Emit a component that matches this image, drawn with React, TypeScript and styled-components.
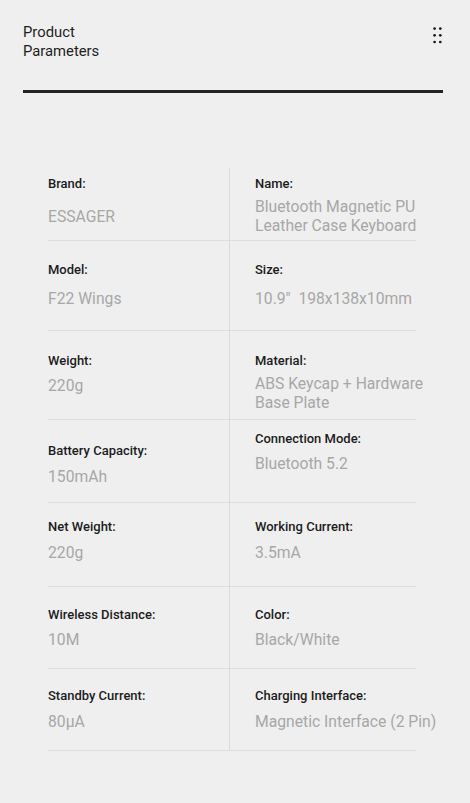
import React from 'react';
import styled, { createGlobalStyle } from 'styled-components';

const GlobalStyle = createGlobalStyle`
  html, body {
    margin: 0;
    padding: 0;
    background: #efefef;
  }
  body {
    font-family: Roboto, "Noto Sans", "Liberation Sans", sans-serif;
    -webkit-font-smoothing: antialiased;
  }
`;

const Page = styled.div({
  width: 470,
  minHeight: 803,
  background: '#efefef',
  boxSizing: 'border-box',
  paddingTop: 23,
});

const Header = styled.header({
  display: 'flex',
  justifyContent: 'space-between',
  alignItems: 'flex-start',
  padding: '0 26px 0 23px',
});

const Title = styled.h1({
  margin: 0,
  fontSize: '14.8px',
  fontWeight: 400,
  lineHeight: '19px',
  color: '#1e1e1e',
  width: 100,
});

const Rule = styled.div({
  height: 3,
  margin: '29px 27px 0 23px',
  background: '#232323',
});

const Grid = styled.div({
  display: 'grid',
  gridTemplateColumns: '181px 187px',
  margin: '75px 0 0 48px',
  width: 368,
});

const Cell = styled.div<{ $right?: boolean; $top: number; $height: number }>`
  box-sizing: border-box;
  height: ${(p) => p.$height}px;
  padding-top: ${(p) => p.$top}px;
  padding-left: ${(p) => (p.$right ? 25 : 0)}px;
  border-bottom: 1px solid #dddddd;
  border-left: ${(p) => (p.$right ? '1px solid #dadada' : 'none')};
  display: flex;
  flex-direction: column;
`;

const Label = styled.div({
  fontSize: '13px',
  fontWeight: 500,
  lineHeight: '16px',
  color: '#1c1c1c',
});

const Value = styled.div<{ $gap: number }>`
  margin-top: ${(p) => p.$gap}px;
  font-size: 15.7px;
  line-height: 19px;
  color: #a7a7a7;
  width: 192px;
`;

type Item = { label: string; value: string; top: number; gap: number };
type Row = { height: number; left: Item; right: Item };

const rows: Row[] = [
  {
    height: 73,
    left: { label: 'Brand:', value: 'ESSAGER', top: 8, gap: 15 },
    right: { label: 'Name:', value: 'Bluetooth Magnetic PU Leather Case Keyboard', top: 8, gap: 5 },
  },
  {
    height: 90,
    left: { label: 'Model:', value: 'F22 Wings', top: 21, gap: 11 },
    right: { label: 'Size:', value: '10.9"\u00a0\u00a0198x138x10mm', top: 21, gap: 11 },
  },
  {
    height: 89,
    left: { label: 'Weight:', value: '220g', top: 22, gap: 7 },
    right: { label: 'Material:', value: 'ABS Keycap + Hardware Base Plate', top: 22, gap: 5 },
  },
  {
    height: 83,
    left: { label: 'Battery Capacity:', value: '150mAh', top: 23, gap: 8 },
    right: { label: 'Connection Mode:', value: 'Bluetooth 5.2', top: 11, gap: 7 },
  },
  {
    height: 84,
    left: { label: 'Net Weight:', value: '220g', top: 16, gap: 8 },
    right: { label: 'Working Current:', value: '3.5mA', top: 16, gap: 8 },
  },
  {
    height: 82,
    left: { label: 'Wireless Distance:', value: '10M', top: 20, gap: 7 },
    right: { label: 'Color:', value: 'Black/White', top: 20, gap: 7 },
  },
  {
    height: 82,
    left: { label: 'Standby Current:', value: '80μA', top: 19, gap: 8 },
    right: { label: 'Charging Interface:', value: 'Magnetic Interface (2 Pin)', top: 19, gap: 8 },
  },
];

const DotsIcon = () => (
  <svg width="11" height="18" viewBox="0 0 11 18" style={{ marginTop: 4 }}>
    {[1.6, 8.3, 15].map((cy) =>
      [1.6, 7.3].map((cx) => <circle key={`${cx}-${cy}`} cx={cx} cy={cy} r="1.35" fill="#1a1a1a" />)
    )}
  </svg>
);

const App: React.FC = () => (
  <Page>
    <GlobalStyle />
    <Header>
      <Title>Product Parameters</Title>
      <DotsIcon />
    </Header>
    <Rule />
    <Grid>
      {rows.map((row) => (
        <React.Fragment key={row.left.label}>
          <Cell $top={row.left.top} $height={row.height}>
            <Label>{row.left.label}</Label>
            <Value $gap={row.left.gap}>{row.left.value}</Value>
          </Cell>
          <Cell $right $top={row.right.top} $height={row.height}>
            <Label>{row.right.label}</Label>
            <Value $gap={row.right.gap}>{row.right.value}</Value>
          </Cell>
        </React.Fragment>
      ))}
    </Grid>
  </Page>
);

export default App;
